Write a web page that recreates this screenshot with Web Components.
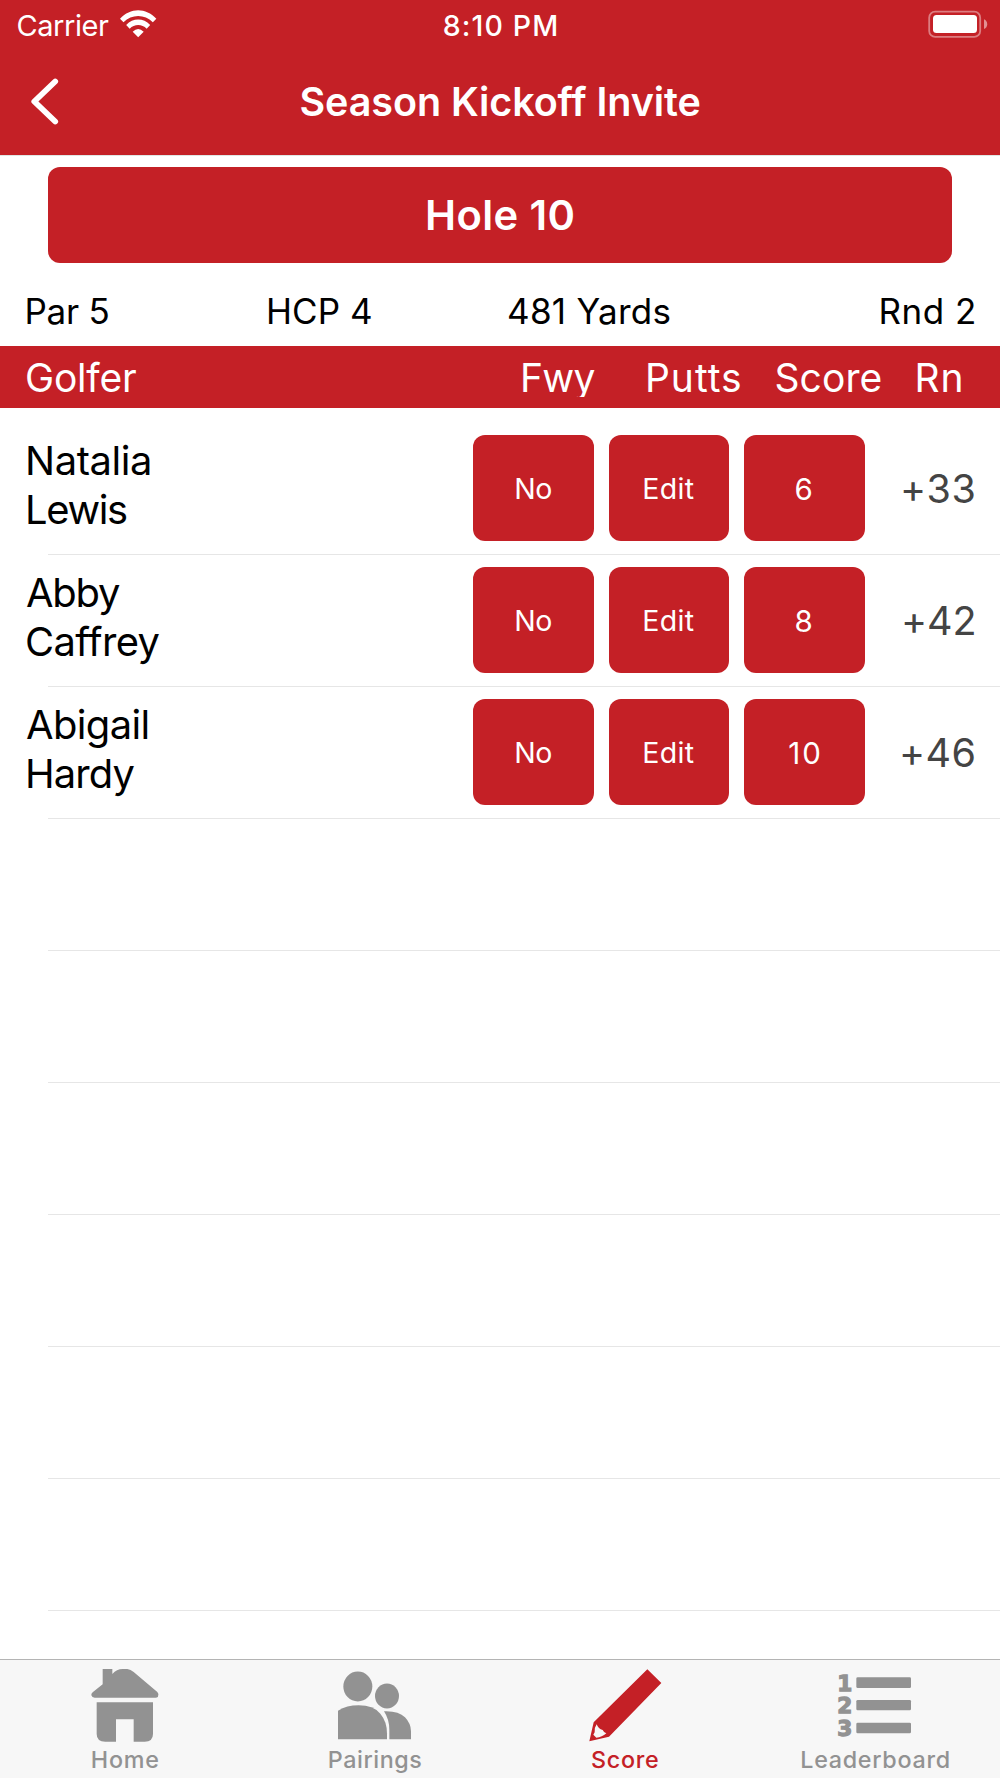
<!DOCTYPE html>
<html lang="en">
<head>
<meta charset="utf-8">
<title>Season Kickoff Invite</title>
<style>
  html, body { margin: 0; background: #fff; }
  body { width: 1000px; height: 1778px; overflow: hidden; font-family: Inter, "Liberation Sans", sans-serif; font-variant-ligatures: none; --brand: #c42026; }
</style>
</head>
<body>
<score-app></score-app>

<script>
const define = (name, html, setup) => {
  const tpl = document.createElement('template');
  tpl.innerHTML = html;
  customElements.define(name, class extends HTMLElement {
    connectedCallback() {
      if (this.shadowRoot) return;
      this.attachShadow({ mode: 'open' }).append(tpl.content.cloneNode(true));
      if (setup) setup(this, this.shadowRoot);
    }
  });
};

/* Label whose box hugs its ink: w = ink width, s = font size, b = weight */
const ctx = document.createElement('canvas').getContext('2d');
define('fit-label', `
  <style>
    :host { display: block; flex: none; white-space: nowrap; }
    span { display: block; }
  </style><span><slot></slot></span>`, (el, root) => {
  const size = el.getAttribute('s'), weight = el.getAttribute('b') || 400;
  const width = parseFloat(el.getAttribute('w'));
  const text = el.textContent;
  ctx.font = `${weight} ${size}px Inter, "Liberation Sans", sans-serif`;
  const m = ctx.measureText(text);
  const ink = m.actualBoundingBoxRight + m.actualBoundingBoxLeft;
  const span = root.querySelector('span');
  el.style.width = width + 'px';
  span.style.fontSize = size + 'px';
  span.style.fontWeight = weight;
  span.style.marginLeft = m.actualBoundingBoxLeft + 'px';
  if (text.length > 1) span.style.letterSpacing = ((width - ink) / (text.length - 1)).toFixed(3) + 'px';
});

define('status-bar', `
  <style>
    :host { display: grid; grid-template-columns: 1fr auto 1fr; height: 50px; line-height: 52px; background: var(--brand); color: #fff; }
    .left { display: flex; padding-left: 17.5px; gap: 11px; }
    .right { display: flex; justify-content: flex-end; padding-right: 12px; }
    svg { display: block; }
  </style>
  <div class="left">
    <fit-label s="29" w="91.5">Carrier</fit-label>
    <svg width="37" height="50" viewBox="361 0 111 150" fill="#fff">
      <path d="M361 56C392 22 439 22 470 56L459.500 67C435 42 396 42 371.500 67Z"/>
      <path d="M379.500 75C400 53 431 53 451.500 75L441 86C427 71 404 71 390 86Z"/>
      <path d="M399 95Q415.500 79 432 95L415.500 111.500Z"/>
    </svg>
  </div>
  <fit-label s="28.5" b="550" w="112.5">8:10 PM</fit-label>
  <div class="right">
    <svg width="60" height="50" viewBox="928 0 60 50">
      <rect x="929.200" y="11.700" width="51" height="25.200" rx="6" fill="none" stroke="#fff" stroke-opacity=".42" stroke-width="1.800"/>
      <rect x="933" y="15" width="44" height="18" rx="3.500" fill="#fff"/>
      <path d="M984 19.300Q987.200 20.800 987.200 24.200T984 29.100Z" fill="#fff" fill-opacity=".5"/>
    </svg>
  </div>`);

define('nav-bar', `
  <style>
    :host { display: grid; grid-template-columns: 1fr auto 1fr; line-height: 105px; background: var(--brand); color: #fff; border-bottom: 1px solid #dfe6e4; box-sizing: border-box; height: 106px; }
    svg { display: block; }
  </style>
  <svg width="90" height="104" viewBox="0 50 90 104"><path d="M55.200 81.500L34.300 101.500L55.200 121.500" fill="none" stroke="#fff" stroke-width="5.800" stroke-linecap="round" stroke-linejoin="round"/></svg>
  <fit-label s="39.500" b="600" w="399">Season Kickoff Invite</fit-label>
  <span></span>`);

define('hole-button', `
  <style>
    :host { display: flex; justify-content: center; margin: 11px 48.300px 0; height: 96px; line-height: 96px; border-radius: 12px; background: var(--brand); color: #fff; }
    fit-label { margin-left: 1.500px; }
  </style>
  <fit-label s="41.700" b="600" w="145.500">Hole 10</fit-label>`);

define('hole-info', `
  <style>
    :host { display: grid; grid-template-columns: 241.500px 240px 372.500px auto; padding: 14px 0 0 27.500px; height: 68.500px; line-height: 68px; color: #000; }
  </style>
  <fit-label s="35" w="81">Par 5</fit-label>
  <fit-label s="35" w="102">HCP 4</fit-label>
  <fit-label s="35" w="160.500">481 Yards</fit-label>
  <fit-label s="35" w="92.500">Rnd 2</fit-label>`);

define('table-head', `
  <style>
    :host { display: grid; grid-template-columns: 496px 125px 128.500px 141px auto; align-items: start; box-sizing: border-box; padding: 12px 0 0 27px; height: 62.500px; line-height: 39px; background: var(--brand); color: #fff; }
    .clip { height: 39px; overflow-y: clip; overflow-x: visible; }
  </style>
  <fit-label s="39" w="109">Golfer</fit-label>
  <fit-label class="clip" s="39" w="71.500">Fwy</fit-label>
  <fit-label s="39" w="92">Putts</fit-label>
  <fit-label s="39" w="104">Score</fit-label>
  <fit-label s="39" w="44">Rn</fit-label>`);

define('score-button', `
  <style>
    :host { display: flex; justify-content: center; align-items: center; width: 120.700px; height: 106px; border-radius: 12px; background: var(--brand); color: #fff; line-height: 40px; }
    ::slotted(*) { padding-top: 1px; }
  </style><slot></slot>`);

define('golfer-row', `
  <style>
    :host { display: flex; flex-direction: column; height: 132px; }
    .content { display: flex; height: 131px; }
    .name { width: 445.300px; padding: 14px 0 0 28px; box-sizing: content-box; line-height: 48.700px; color: #000; }
    .buttons { display: flex; gap: 14.600px; padding-top: 12px; }
    .total { flex: 1; display: flex; justify-content: flex-end; padding: 13px 25.500px 0 0; height: 106px; line-height: 107px; color: #444; }
    .rule { height: 1px; margin-left: 48px; background: #e6e6e6; }
  </style>
  <div class="content">
    <div class="name"><slot name="name"></slot></div>
    <div class="buttons"><slot></slot></div>
    <div class="total"><slot name="total"></slot></div>
  </div>
  <div class="rule"></div>`);

define('tab-item', `
  <style>
    :host { display: flex; flex-direction: column; align-items: center; width: 250px; color: #929292; line-height: 29px; }
    :host([active]) { color: var(--brand); }
  </style>
  <slot name="icon"></slot><slot></slot>`);

define('tab-bar', `
  <style>
    :host { display: flex; box-sizing: border-box; height: 119px; border-top: 1px solid #b4b4b4; background: #f7f7f7; }
    svg { display: block; fill: currentColor; }
  </style>
  <tab-item>
    <svg slot="icon" width="250" height="85"><g transform="translate(70 -10) scale(.33333)">
      <path d="M98 57H127V72Q140 57 158 57H172Q182 58 191 66L262 126Q268 132 264 140Q262 143 256 143H74Q66 143 64 136Q63 131 68 127L98 103Z"/>
      <path d="M80 157H249V252Q249 275 224 275H191V208H138V275H106Q80 275 80 252Z"/>
    </g></svg>
    <fit-label s="23.300" b="450" w="66.500">Home</fit-label>
  </tab-item>
  <tab-item>
    <svg slot="icon" width="250" height="85"><g transform="translate(60 -10) scale(.33333)">
      <ellipse cx="143.500" cy="109.500" rx="43.500" ry="45"/>
      <ellipse cx="231" cy="138" rx="36" ry="37.500"/>
      <path d="M84 268V182Q110 166 146 166Q190 166 211 191Q231 215 231 250V268Z"/>
      <path d="M222 184Q265 182 285 202Q303 221 303 244V268H238V240Q238 208 222 184Z"/>
    </g></svg>
    <fit-label s="23.300" b="450" w="92.500">Pairings</fit-label>
  </tab-item>
  <tab-item active>
    <svg slot="icon" width="250" height="85"><g transform="translate(60 -10) scale(.33333)">
      <path fill-rule="evenodd" d="M262 58L304 99L147 260L88 274L101 217ZM110 223Q102 234 104 247L100 254L109 263Q126 262 139 250Q131 247 128 240Q115 237 110 223Z"/>
    </g></svg>
    <fit-label s="23.300" b="450" w="66">Score</fit-label>
  </tab-item>
  <tab-item>
    <svg slot="icon" width="250" height="85"><g transform="translate(30 -10) scale(.33333)">
      <g font-family="DejaVu Sans" font-weight="700" font-size="66" stroke="currentColor" stroke-width="4">
        <text x="172" y="122" textLength="45" lengthAdjust="spacingAndGlyphs">1</text>
        <text x="172" y="189.500" textLength="45" lengthAdjust="spacingAndGlyphs">2</text>
        <text x="172" y="257" textLength="45" lengthAdjust="spacingAndGlyphs">3</text>
      </g>
      <rect x="229" y="82" width="164" height="32" rx="4"/>
      <rect x="229" y="150" width="164" height="31" rx="4"/>
      <rect x="229" y="218" width="164" height="32" rx="4"/>
    </g></svg>
    <fit-label s="23.300" b="450" w="147.500">Leaderboard</fit-label>
  </tab-item>`);

define('score-app', `
  <style>
    :host { display: flex; flex-direction: column; width: 1000px; height: 1778px; background: #fff; }
    main { flex: 1; padding-top: 15px; }
    .a { margin-left: -1px; }
  </style>
  <status-bar></status-bar>
  <nav-bar></nav-bar>
  <hole-button></hole-button>
  <hole-info></hole-info>
  <table-head></table-head>
  <main>
    <golfer-row>
      <fit-label slot="name" s="39.900" w="122">Natalia</fit-label>
      <fit-label slot="name" s="39.900" w="99">Lewis</fit-label>
      <score-button><fit-label s="28.500" w="35">No</fit-label></score-button>
      <score-button><fit-label s="28.500" w="49.500">Edit</fit-label></score-button>
      <score-button><fit-label s="29.500" w="17.500">6</fit-label></score-button>
      <fit-label slot="total" s="39.500" w="71.500">+33</fit-label>
    </golfer-row>
    <golfer-row>
      <fit-label slot="name" class="a" s="39.900" w="93">Abby</fit-label>
      <fit-label slot="name" class="a" s="39.900" w="132.500">Caffrey</fit-label>
      <score-button><fit-label s="28.500" w="35">No</fit-label></score-button>
      <score-button><fit-label s="28.500" w="49.500">Edit</fit-label></score-button>
      <score-button><fit-label s="29.500" w="17.500">8</fit-label></score-button>
      <fit-label slot="total" s="39.500" w="70.500">+42</fit-label>
    </golfer-row>
    <golfer-row>
      <fit-label slot="name" class="a" s="39.900" w="120.500">Abigail</fit-label>
      <fit-label slot="name" s="39.900" w="106.500">Hardy</fit-label>
      <score-button><fit-label s="28.500" w="35">No</fit-label></score-button>
      <score-button><fit-label s="28.500" w="49.500">Edit</fit-label></score-button>
      <score-button><fit-label s="29.500" w="30">10</fit-label></score-button>
      <fit-label slot="total" s="39.500" w="72.500">+46</fit-label>
    </golfer-row>
    <golfer-row></golfer-row>
    <golfer-row></golfer-row>
    <golfer-row></golfer-row>
    <golfer-row></golfer-row>
    <golfer-row></golfer-row>
    <golfer-row></golfer-row>
  </main>
  <tab-bar></tab-bar>`);
</script>
</body>
</html>
